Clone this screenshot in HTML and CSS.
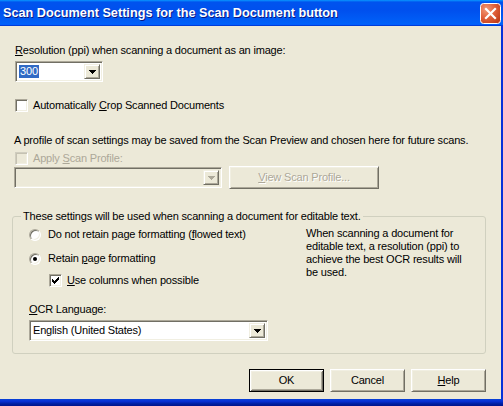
FILE: index.html
```html
<!DOCTYPE html>
<html>
<head>
<meta charset="utf-8">
<link rel="stylesheet" href="styles.css">
</head>
<body>
<div class="window">
  <div class="titlebar">
    <span class="title">Scan Document Settings for the Scan Document button</span>
    <span class="close">
      <svg width="21" height="21" viewBox="0 0 21 21">
        <defs>
          <radialGradient id="cg" cx="30%" cy="30%" r="80%">
            <stop offset="0" stop-color="#F29A78"/>
            <stop offset="0.55" stop-color="#E0603A"/>
            <stop offset="1" stop-color="#C2401C"/>
          </radialGradient>
        </defs>
        <rect x="0.5" y="0.5" width="20" height="20" rx="3" fill="url(#cg)" stroke="#fff"/>
        <path d="M6 6 L15 15 M15 6 L6 15" stroke="#fff" stroke-width="2.2" stroke-linecap="square"/>
      </svg>
    </span>
  </div>
  <div class="client">
    <div class="top">
      <div class="text lbl-res"><u>R</u>esolution (ppi) when scanning a document as an image:</div>
      <div class="combo combo-res">
        <span class="combo-text"><span class="sel">300</span></span>
        <span class="drop"><svg class="arrow" width="7" height="4" viewBox="0 0 7 4"><path d="M0 0h7v1H0zM1 1h5v1H1zM2 2h3v1H2zM3 3h1v1H3z"/></svg></span>
      </div>
      <div class="check-row row-crop">
        <span class="checkbox"></span>
        <span class="text">Automatically <u>C</u>rop Scanned Documents</span>
      </div>
      <div class="text lbl-profile">A profile of scan settings may be saved from the Scan Preview and chosen here for future scans.</div>
      <div class="check-row row-apply disabled">
        <span class="checkbox"></span>
        <span class="text">Apply <u>S</u>can Profile:</span>
      </div>
      <div class="profile-row">
        <div class="combo combo-profile disabled">
          <span class="combo-text"></span>
          <span class="drop"><svg class="arrow" width="7" height="4" viewBox="0 0 7 4"><path d="M0 0h7v1H0zM1 1h5v1H1zM2 2h3v1H2zM3 3h1v1H3z"/></svg></span>
        </div>
        <div class="btn btn-view disabled"><span><u>V</u>iew Scan Profile...</span></div>
      </div>
    </div>
    <fieldset class="group">
      <legend>These settings will be used when scanning a document for editable text.</legend>
      <div class="group-body">
        <div class="options">
          <div class="radio-row row-r1">
            <span class="radio"></span>
            <span class="text">Do not retain page formatting (<u>f</u>lowed text)</span>
          </div>
          <div class="radio-row row-r2">
            <span class="radio checked"></span>
            <span class="text">Retain <u>p</u>age formatting</span>
          </div>
          <div class="check-row row-cols">
            <span class="checkbox"><svg width="7" height="7" viewBox="0 0 7 7" shape-rendering="crispEdges"><path d="M0 2H1V3H2V4H3V3H4V2H5V1H6V0H7V3H6V4H5V5H4V6H3V7H2V6H1V5H0Z"/></svg></span>
            <span class="text"><u>U</u>se columns when possible</span>
          </div>
        </div>
        <div class="note text">When scanning a document for<br>editable text, a resolution (ppi) to<br>achieve the best OCR results will<br>be used.</div>
      </div>
      <div class="text lbl-ocr"><u>O</u>CR Language:</div>
      <div class="combo combo-ocr">
        <span class="combo-text">English (United States)</span>
        <span class="drop"><svg class="arrow" width="7" height="4" viewBox="0 0 7 4"><path d="M0 0h7v1H0zM1 1h5v1H1zM2 2h3v1H2zM3 3h1v1H3z"/></svg></span>
      </div>
    </fieldset>
    <div class="buttons">
      <div class="btn default"><span>OK</span></div>
      <div class="btn"><span>Cancel</span></div>
      <div class="btn"><span><u>H</u>elp</span></div>
    </div>
  </div>
  <div class="frame-bottom"></div>
</div>
</body>
</html>
```
FILE: styles.css
```css
* { box-sizing: border-box; }
html, body { margin: 0; padding: 0; }
body {
  width: 503px;
  height: 406px;
  overflow: hidden;
  background: #0831D9;
  font-family: "Liberation Sans", Arial, sans-serif;
  font-size: 11px;
  line-height: 13px;
  letter-spacing: -0.18px;
  color: #000;
}
u { text-decoration: underline; text-underline-offset: 1px; }

.window {
  width: 503px;
  height: 406px;
  display: flex;
  flex-direction: column;
  background: linear-gradient(to right, #0842D4 0, #0831D9 100%);
}

.titlebar {
  height: 26px;
  flex: none;
  display: flex;
  align-items: center;
  justify-content: space-between;
  padding: 0 2px 0 3px;
  background: linear-gradient(180deg, #0997FF 0, #0053EE 8%, #0050EE 40%, #0060F8 88%, #0062FA 93%, #005BFF 95%, #003DD7 96%, #003DD7 100%);
}
.title {
  color: #fff;
  font-weight: bold;
  font-size: 12.7px;
  letter-spacing: 0;
  text-shadow: 1px 1px 0 #0A1883;
  white-space: nowrap;
  padding-top: 1px;
}
.close { display: block; width: 21px; height: 21px; margin-top: 0; }
.close svg { display: block; }

.client {
  width: 501px;
  height: 373px;
  flex: none;
  background: #ECE9D8;
  padding: 18px 15px 0 12px;
}
.frame-bottom {
  flex: 1;
  background: linear-gradient(180deg, #0842D4 0, #0831D9 30%, #001EA0 70%, #00138C 100%);
}

.text { white-space: nowrap; }

.top { padding-left: 3px; }

/* Combo boxes (classic sunken) */
.combo {
  display: flex;
  height: 21px;
  background: #fff;
  border: 1px solid;
  border-color: #ACA899 #fff #fff #ACA899;
  box-shadow: inset 1px 1px 0 #716F64, inset -1px -1px 0 #F1EFE2;
  padding: 2px;
}
.combo-text {
  flex: 1;
  display: flex;
  align-items: center;
  padding-left: 1px;
  white-space: nowrap;
}
.sel {
  background: #316AC5;
  color: #fff;
  padding: 0 1px;
  line-height: 13px;
}
.drop {
  width: 16px;
  flex: none;
  display: flex;
  align-items: center;
  justify-content: center;
  background: #ECE9D8;
  border: 1px solid;
  border-color: #F1EFE2 #716F64 #716F64 #F1EFE2;
  box-shadow: inset 1px 1px 0 #fff, inset -1px -1px 0 #ACA899;
}
.arrow { display: block; fill: #000; margin-top: 1px; }
.combo.disabled { background: #ECE9D8; }
.combo.disabled .arrow { fill: #ACA899; }

.combo-res { width: 88px; margin-top: 4px; }

/* Check boxes */
.check-row, .radio-row {
  display: flex;
  align-items: center;
  height: 13px;
}
.checkbox {
  width: 13px;
  height: 13px;
  flex: none;
  display: flex;
  align-items: center;
  justify-content: center;
  background: #fff;
  border: 1px solid;
  border-color: #ACA899 #fff #fff #ACA899;
  box-shadow: inset 1px 1px 0 #716F64, inset -1px -1px 0 #F1EFE2;
}
.checkbox svg { display: block; fill: #000; }
.check-row .text { margin-left: 5px; }
.check-row.disabled .checkbox {
  background: #ECE9D8;
  border-color: #D0CDBF #fff #fff #D0CDBF;
  box-shadow: inset 1px 1px 0 #C5C2B2, inset -1px -1px 0 #F1EFE2;
}
.disabled .text, .btn.disabled span {
  color: #ACA899;
}

.row-crop { margin-top: 17px; }
.lbl-profile { margin-top: 22px; margin-left: -1px; }
.row-apply { margin-top: 5px; }

.profile-row {
  display: flex;
  align-items: center;
  gap: 7px;
  margin-top: 1px;
  margin-left: -1px;
}
.combo-profile { width: 208px; }

/* Buttons (classic raised) */
.btn {
  display: flex;
  align-items: center;
  justify-content: center;
  height: 23px;
  width: 75px;
  background: #ECE9D8;
  border: 1px solid;
  border-color: #fff #716F64 #716F64 #fff;
  box-shadow: inset 1px 1px 0 #F1EFE2, inset -1px -1px 0 #ACA899;
  white-space: nowrap;
}
.btn.default {
  border: 1px solid #000;
  box-shadow: inset 1px 1px 0 #fff, inset -1px -1px 0 #716F64, inset 2px 2px 0 #F1EFE2, inset -2px -2px 0 #ACA899;
}
.btn-view { width: 150px; height: 23px; }
.btn.disabled span { text-shadow: 1px 1px 0 #fff; }

/* Group box */
.group {
  margin: 21px 0 0 0;
  width: 474px;
  border: 1px solid #D0D0BF;
  border-radius: 3px;
  padding: 5px 6px 12px 16px;
  min-width: 0;
}
.group legend {
  padding: 0 2px;
  margin-left: -8px;
  line-height: 13px;
  white-space: nowrap;
}
.group-body {
  display: flex;
}
.options { width: 261px; flex: none; }
.radio {
  width: 12px;
  height: 12px;
  flex: none;
  border-radius: 50%;
  background: #fff;
  border: 1px solid;
  border-color: #ACA899 #fff #fff #ACA899;
  box-shadow: inset 1px 1px 0 #716F64, inset -1px -1px 0 #F1EFE2;
  display: flex;
  align-items: center;
  justify-content: center;
}
.radio.checked::after {
  content: "";
  width: 4px;
  height: 4px;
  border-radius: 50%;
  background: #000;
}
.radio-row .text { margin-left: 7px; }
.row-r2 { margin-top: 11px; }
.row-cols { margin-top: 9px; margin-left: 20px; }
.note { margin-top: -1px; margin-left: 16px; line-height: 13px; }

.lbl-ocr { margin-top: 16px; }
.combo-ocr { width: 239px; margin-top: 4px; }

.buttons {
  display: flex;
  justify-content: flex-end;
  gap: 6px;
  margin-top: 15px;
}
```
